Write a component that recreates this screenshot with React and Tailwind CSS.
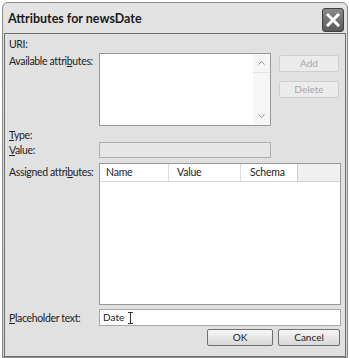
import React from "react";

const font = { fontFamily: 'Lato, "Noto Sans", sans-serif' };

function Label({ children, className = "" }) {
  return <div className={"text-[10.5px] tracking-[-0.35px] leading-[14px] text-[#222] whitespace-nowrap " + className}>{children}</div>;
}

export default function App() {
  return (
    <div className="w-[350px] h-[358px] bg-white pt-[2px] px-[2px] overflow-hidden" style={font}>
      <div className="h-[356px] border border-[#8a8a8a] rounded-t-[6px] bg-gradient-to-b from-[#e4e4e4] to-[#cfcfcf] flex flex-col px-[1px]">
        <div className="h-[30px] flex items-center justify-between pl-[4px] pr-[2px] shrink-0">
          <div className="text-[12.5px] font-bold text-[#1a1a1a] mt-[2px]">Attributes for newsDate</div>
          <div className="w-[22px] h-[24px] mt-[3px] rounded-[3px] border border-[#3f3f3f] bg-gradient-to-b from-[#8a8a8a] to-[#5a5a5a] flex items-center justify-center">
            <svg width="14" height="14" viewBox="0 0 14 14">
              <path d="M2 2 L12 12 M12 2 L2 12" stroke="white" strokeWidth="3" strokeLinecap="square" />
            </svg>
          </div>
        </div>
        <div className="flex-1 border border-[#6e6e6e] bg-[#e1e1e1] pl-[4px] pr-[3px] flex flex-col">
          {/* URI */}
          <Label className="mt-[3px] h-[14px]">URI:</Label>
          {/* Available attributes */}
          <div className="flex mt-[2px]">
            <Label className="w-[90px] pt-[1px]">Available attri<u>b</u>utes:</Label>
            <div className="w-[172px] h-[73px] border border-[#9a9a9a] bg-white flex justify-end">
              <div className="w-[17px] h-full bg-[#f6f6f6] flex flex-col justify-between items-center text-[#b8b8b8]">
                <div className="w-full h-[19px] border-b border-[#e4e4e4] flex items-center justify-center">
                  <svg width="7" height="4" viewBox="0 0 7 4"><path d="M0.5 3.5 L3.5 0.5 L6.5 3.5" stroke="#9a9a9a" fill="none" /></svg>
                </div>
                <div className="w-full h-[19px] flex items-center justify-center">
                  <svg width="7" height="4" viewBox="0 0 7 4"><path d="M0.5 0.5 L3.5 3.5 L6.5 0.5" stroke="#9a9a9a" fill="none" /></svg>
                </div>
              </div>
            </div>
            <div className="ml-[8px] flex flex-col gap-[9px] mt-[2px]">
              <div className="w-[60px] h-[17px] border border-[#cfcfcf] rounded-[2px] bg-[#ececec] text-[10px] text-[#a8a8a8] flex items-center justify-center">Add</div>
              <div className="w-[60px] h-[17px] border border-[#cfcfcf] rounded-[2px] bg-[#ececec] text-[10px] text-[#a8a8a8] flex items-center justify-center">Delete</div>
            </div>
          </div>
          {/* Type */}
          <Label className="mt-[1px] h-[15px] pt-[1px]"><u>T</u>ype:</Label>
          {/* Value */}
          <div className="flex items-center h-[16px]">
            <Label className="w-[90px]"><u>V</u>alue:</Label>
            <div className="w-[172px] h-[16px] border border-[#b0b0b0] bg-[#e6e6e6]"></div>
          </div>
          {/* Assigned */}
          <div className="flex mt-[5px]">
            <Label className="w-[90px] pt-[2px]">Assigned attri<u>b</u>utes:</Label>
            <div className="w-[242px] h-[142px] border border-[#9a9a9a] bg-white flex flex-col">
              <div className="h-[18px] flex border-b border-[#d4d4d4] text-[10.5px] tracking-[-0.2px] text-[#222] shrink-0">
                <div className="w-[69px] pl-[6px] border-r border-[#dedede] flex items-center">Name</div>
                <div className="w-[72px] pl-[8px] border-r border-[#dedede] flex items-center">Value</div>
                <div className="w-[57px] pl-[9px] border-r border-[#cfcfcf] flex items-center">Schema</div>
                <div className="flex-1 bg-[#f0f0f0]"></div>
              </div>
              <div className="flex-1"></div>
            </div>
          </div>
          {/* Placeholder */}
          <div className="flex items-center mt-[4px]">
            <Label className="w-[90px]"><u>P</u>laceholder text:</Label>
            <div className="w-[242px] h-[17px] border border-[#a8a8a8] bg-white flex items-center pl-[3px] text-[10px] text-[#222]">
              Date
              <svg className="ml-[4px]" width="5" height="12" viewBox="0 0 5 12">
                <path d="M0 0.5 H5 M2.5 0.5 V11.5 M0 11.5 H5" stroke="#333" strokeWidth="1" fill="none" />
              </svg>
            </div>
          </div>
          {/* Buttons */}
          <div className="flex justify-end gap-[5px] mt-[3px] pr-[2px]">
            <div className="w-[66px] h-[17px] border border-[#707070] rounded-[2px] bg-gradient-to-b from-[#f6f6f6] to-[#d8d8d8] text-[10px] text-[#222] flex items-center justify-center">OK</div>
            <div className="w-[62px] h-[17px] border border-[#707070] rounded-[2px] bg-gradient-to-b from-[#f6f6f6] to-[#d8d8d8] text-[10px] text-[#222] flex items-center justify-center">Cancel</div>
          </div>
        </div>
      </div>
    </div>
  );
}
